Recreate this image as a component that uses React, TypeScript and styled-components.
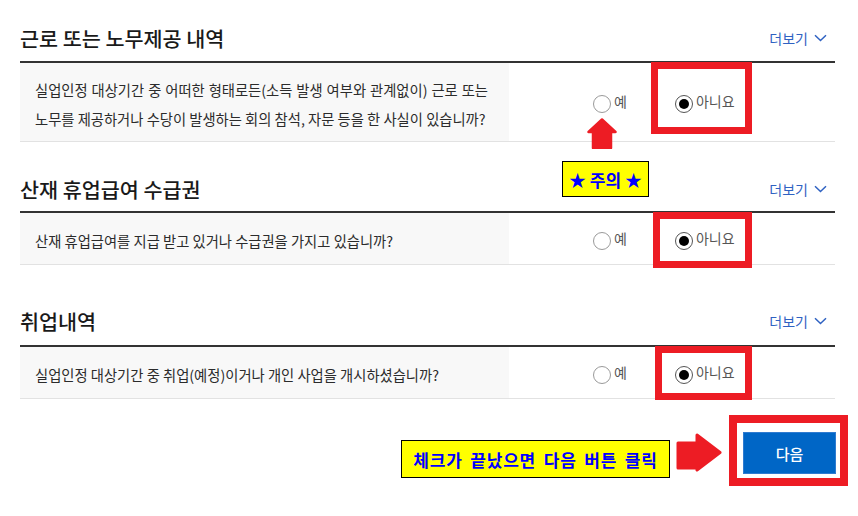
import React from 'react';
import styled, { createGlobalStyle } from 'styled-components';

const GlobalStyle = createGlobalStyle`
  html, body {
    margin: 0;
    padding: 0;
    background: #fff;
  }
  body {
    font-family: 'Noto Sans CJK KR', 'Noto Sans', sans-serif;
    color: #222;
  }
`;

const Page = styled.div`
  position: relative;
  width: 858px;
  height: 516px;
  overflow: hidden;
  padding: 0 23px 0 20px;
  box-sizing: border-box;
`;

const Section = styled.section<{ $top: number }>`
  margin-top: ${(p) => p.$top}px;
`;

const SectionHeader = styled.div<{ $gap: number }>`
  display: flex;
  justify-content: space-between;
  align-items: center;
  padding-bottom: ${(p) => p.$gap}px;
  border-bottom: 2px solid #333;
`;

const Title = styled.h2`
  margin: 0;
  font-size: 20.7px;
  line-height: 28px;
  font-weight: 500;
  color: #1a1a1a;
`;

const MoreLink = styled.a`
  display: flex;
  align-items: center;
  gap: 6px;
  padding-right: 8px;
  font-size: 14px;
  color: #2f62c2;
  text-decoration: none;
  cursor: pointer;
`;

const Row = styled.div<{ $height: number }>`
  display: grid;
  grid-template-columns: 489px 1fr;
  min-height: ${(p) => p.$height}px;
  border-bottom: 1px solid #e2e2e2;
`;

const Question = styled.div`
  display: flex;
  flex-direction: column;
  justify-content: center;
  padding: 3px 15px 0;
  background: #f8f8f8;
  font-size: 14.3px;
  line-height: 29px;
  color: #2b2b2b;
  white-space: nowrap;
`;

const Line = styled.span<{ $spread?: boolean }>`
  display: block;
  width: ${(p) => (p.$spread ? '453px' : 'auto')};
  text-align: ${(p) => (p.$spread ? 'justify' : 'left')};
  text-align-last: ${(p) => (p.$spread ? 'justify' : 'auto')};
  white-space: ${(p) => (p.$spread ? 'normal' : 'nowrap')};
`;

const Answers = styled.div`
  display: flex;
  align-items: center;
  padding: 4px 0 0 84px;
  gap: 48px;
`;

const Option = styled.label`
  position: relative;
  display: inline-flex;
  align-items: center;
  height: 18px;
  gap: 3px;
  cursor: pointer;
`;

const RadioCircle = styled.span<{ $checked?: boolean }>`
  display: flex;
  align-items: center;
  justify-content: center;
  width: 18px;
  height: 18px;
  box-sizing: border-box;
  border-radius: 50%;
  border: 1px solid ${(p) => (p.$checked ? '#555' : '#9a9a9a')};
  background: #fff;

  &::after {
    content: '';
    display: ${(p) => (p.$checked ? 'block' : 'none')};
    width: 10px;
    height: 10px;
    border-radius: 50%;
    background: #000;
  }
`;

const OptionText = styled.span`
  font-size: 14px;
  line-height: 18px;
  margin-top: -6px;
  color: #555;
`;

const Highlight = styled.span<{ $left: number; $top: number; $w: number; $h: number; $b?: number }>`
  position: absolute;
  left: ${(p) => p.$left}px;
  top: ${(p) => p.$top}px;
  width: ${(p) => p.$w}px;
  height: ${(p) => p.$h}px;
  box-sizing: border-box;
  border: ${(p) => p.$b ?? 7}px solid #ed1c24;
  pointer-events: none;
`;

const Footer = styled.div`
  display: flex;
  justify-content: flex-end;
  align-items: flex-start;
  margin-top: 33px;
`;

const GuideTag = styled.div`
  display: flex;
  align-items: center;
  justify-content: center;
  width: 269px;
  height: 38px;
  margin-top: 8px;
  box-sizing: border-box;
  border: 1px solid #000;
  background: #ffff00;
  color: #0000ff;
  font-size: 17px;
  font-weight: 700;
  letter-spacing: 0.8px;
  word-spacing: 3px;
`;

const ArrowBox = styled.div`
  display: flex;
  margin: 0 21px 0 6px;
`;

const ButtonWrap = styled.div`
  position: relative;
  margin-right: -1px;
`;

const NextButton = styled.button`
  width: 93px;
  height: 42px;
  border: 1px solid #2f7bd0;
  background: #0066c6;
  color: #fff;
  font-family: inherit;
  font-size: 15px;
  font-weight: 500;
  cursor: pointer;
`;

const UpArrow = styled.svg`
  position: absolute;
  left: 587px;
  top: 118px;
`;

const NoticeTag = styled.div`
  position: absolute;
  left: 562px;
  top: 161px;
  width: 87px;
  height: 36px;
  box-sizing: border-box;
  display: flex;
  align-items: center;
  justify-content: center;
  border: 1px solid #000;
  background: #ffff00;
  color: #0000ff;
  font-size: 17px;
  font-weight: 700;
`;

type Mark = { left: number; top: number; w: number; h: number };

const Chevron = () => (
  <svg width="13" height="8" viewBox="0 0 13 8" fill="none">
    <path d="M1 1.2 L6.5 6.5 L12 1.2" stroke="#2f62c2" strokeWidth="1.5" />
  </svg>
);

const RadioPair: React.FC<{ mark: Mark }> = ({ mark }) => (
  <Answers>
    <Option>
      <RadioCircle />
      <OptionText>예</OptionText>
    </Option>
    <Option>
      <RadioCircle $checked />
      <OptionText>아니요</OptionText>
      <Highlight $left={mark.left} $top={mark.top} $w={mark.w} $h={mark.h} />
    </Option>
  </Answers>
);

const Block: React.FC<{
  title: string;
  top: number;
  gap: number;
  height: number;
  mark: Mark;
  children: React.ReactNode;
}> = ({ title, top, gap, height, mark, children }) => (
  <Section $top={top}>
    <SectionHeader $gap={gap}>
      <Title>{title}</Title>
      <MoreLink>
        더보기 <Chevron />
      </MoreLink>
    </SectionHeader>
    <Row $height={height}>
      <Question>{children}</Question>
      <RadioPair mark={mark} />
    </Row>
  </Section>
);

export default function App() {
  return (
    <Page>
      <GlobalStyle />
      <Block
        title="근로 또는 노무제공 내역"
        top={24}
        gap={9}
        height={78}
        mark={{ left: -24, top: -33, w: 101, h: 72 }}
      >
        <Line $spread>실업인정 대상기간 중 어떠한 형태로든(소득 발생 여부와 관계없이) 근로 또는</Line>
        <Line>노무를 제공하거나 수당이 발생하는 회의 참석, 자문 등을 한 사실이 있습니까?</Line>
      </Block>
      <Block
        title="산재 휴업급여 수급권"
        top={33}
        gap={8}
        height={51}
        mark={{ left: -22, top: -20, w: 99, h: 56 }}
      >
        <Line>산재 휴업급여를 지급 받고 있거나 수급권을 가지고 있습니까?</Line>
      </Block>
      <Block
        title="취업내역"
        top={42}
        gap={10}
        height={51}
        mark={{ left: -20, top: -20, w: 97, h: 54 }}
      >
        <Line>실업인정 대상기간 중 취업(예정)이거나 개인 사업을 개시하셨습니까?</Line>
      </Block>

      <Footer>
        <GuideTag>체크가 끝났으면 다음 버튼 클릭</GuideTag>
        <ArrowBox>
          <svg width="46" height="40" viewBox="0 0 46 40">
            <path
              d="M2 11 H21 V3 L44 20.5 L21 38 V36 H2 Z"
              fill="#ed1c24"
              stroke="#ed1c24"
              strokeWidth="3"
              strokeLinejoin="round"
            />
          </svg>
        </ArrowBox>
        <ButtonWrap>
          <NextButton>다음</NextButton>
          <Highlight $left={-14} $top={-17} $w={119} $h={71} $b={8} />
        </ButtonWrap>
      </Footer>

      <UpArrow width="30" height="31" viewBox="0 0 30 31">
        <path
          d="M15 1.5 L28.5 14 H24 V30 H6 V14 H1.5 Z"
          fill="#ed1c24"
          stroke="#ed1c24"
          strokeWidth="2.5"
          strokeLinejoin="round"
        />
      </UpArrow>
      <NoticeTag>★ 주의 ★</NoticeTag>
    </Page>
  );
}
